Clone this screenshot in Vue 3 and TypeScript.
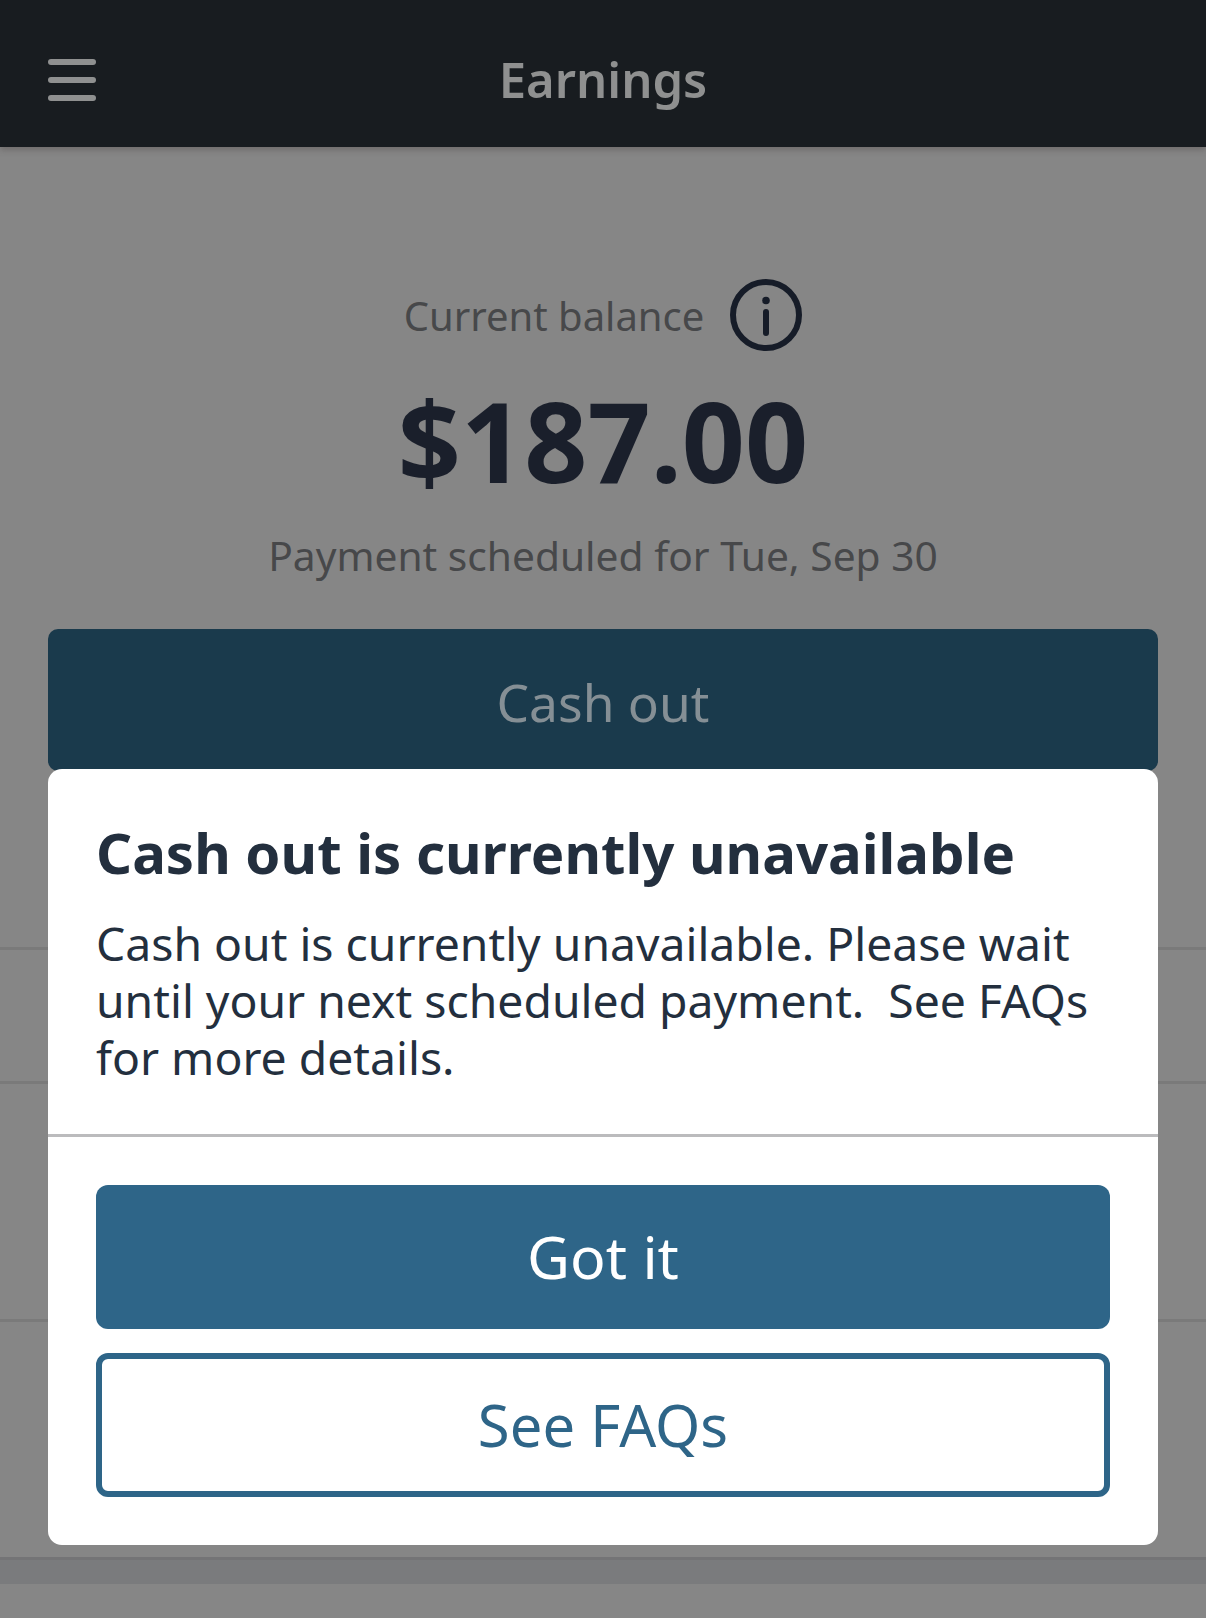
<script setup lang="ts">
const rows: number[] = [134, 238];
</script>

<template>
  <div class="page">
    <header class="bar">
      <div class="burger"><i></i><i></i><i></i></div>
      <h1>Earnings</h1>
    </header>
    <main class="content">
      <div class="balance-label">
        <span>Current balance</span>
        <svg class="info" viewBox="0 0 72 72" aria-hidden="true">
          <circle cx="36" cy="36" r="33" fill="none" stroke="#161c28" stroke-width="6" />
          <circle cx="36" cy="21.5" r="3.8" fill="#161c28" />
          <rect x="33" y="30" width="6" height="27" rx="3" fill="#161c28" />
        </svg>
      </div>
      <div class="amount">$187.00</div>
      <div class="schedule">Payment scheduled for Tue, Sep 30</div>
      <div class="cash">Cash out</div>
    </main>
    <div class="rows">
      <div v-for="h in rows" :key="h" class="row" :style="{ height: h + 'px' }"></div>
    </div>
    <div class="band"></div>

    <section class="modal">
      <div class="modal-body">
        <h2>Cash out is currently unavailable</h2>
        <p>Cash out is currently unavailable. Please wait until your next scheduled payment.&nbsp; See FAQs for more details.</p>
      </div>
      <div class="actions">
        <button class="primary">Got it</button>
        <button class="secondary">See FAQs</button>
      </div>
    </section>
  </div>
</template>

<style>
html, body { margin: 0; background: #868686; }
</style>

<style scoped>
.page {
  position: relative;
  width: 1206px;
  height: 1618px;
  overflow: hidden;
  background: #868686;
  font-family: "Noto Sans", "Open Sans", sans-serif;
}
.bar {
  height: 147px;
  background: #181c20;
  display: flex;
  align-items: center;
  justify-content: center;
  position: relative;
  box-shadow: 0 3px 6px rgba(70, 60, 60, 0.35);
}
.bar h1 {
  margin: 10px 0 0;
  font-size: 49px;
  font-weight: 600;
  color: #8f9090;
}
.burger {
  position: absolute;
  left: 48px;
  top: 59px;
  display: flex;
  flex-direction: column;
  gap: 12px;
}
.burger i {
  display: block;
  width: 48px;
  height: 6px;
  border-radius: 3px;
  background: #8f9090;
}
.content {
  display: flex;
  flex-direction: column;
  align-items: center;
  padding: 132px 48px 0;
}
.balance-label {
  display: flex;
  align-items: center;
  gap: 26px;
  height: 72px;
  font-size: 40px;
  color: #47484a;
}
.info {
  width: 72px;
  height: 72px;
}
.amount {
  margin-top: 24px;
  font-size: 110.5px;
  line-height: 130px;
  font-weight: 700;
  color: #1a1f2b;
}
.schedule {
  margin-top: 22px;
  font-size: 40.7px;
  line-height: 56px;
  color: #47484a;
}
.cash {
  margin-top: 46px;
  align-self: stretch;
  height: 142px;
  padding-top: 38px;
  box-sizing: border-box;
  border-radius: 10px;
  background: #1a3a4c;
  color: #858f95;
  font-size: 51.5px;
  line-height: 70px;
  text-align: center;
}
.rows {
  position: absolute;
  left: 0;
  right: 0;
  top: 947px;
  border-top: 3px solid #7a7a7a;
}
.row {
  box-sizing: border-box;
  border-bottom: 3px solid #7a7a7a;
}
.band {
  position: absolute;
  left: 0;
  right: 0;
  top: 1557px;
  height: 27px;
  border-top: 3px solid #747476;
  box-sizing: border-box;
  background: #7a7b7d;
}
.modal {
  position: absolute;
  left: 48px;
  top: 769px;
  width: 1110px;
  height: 776px;
  background: #fff;
  border-radius: 14px;
  box-sizing: border-box;
}
.modal-body {
  box-sizing: border-box;
  height: 368px;
  padding: 45px 48px 0;
  border-bottom: 3px solid #bbbbbd;
}
h2 {
  margin: 0;
  font-size: 56.3px;
  line-height: 76px;
  font-weight: 700;
  color: #232f3e;
}
p {
  margin: 25px 0 0;
  font-size: 46.3px;
  line-height: 57px;
  color: #232f3e;
}
.actions {
  padding: 48px 48px 0;
  display: flex;
  flex-direction: column;
  gap: 24px;
}
button {
  display: block;
  height: 144px;
  border-radius: 12px;
  font-family: inherit;
  padding: 0 0 2px;
  box-sizing: border-box;
}
.primary {
  border: 0;
  background: #2e6588;
  color: #fff;
  font-size: 59px;
}
.secondary {
  border: 6px solid #2e6588;
  background: #fff;
  color: #2e6588;
  font-size: 58px;
}
</style>
